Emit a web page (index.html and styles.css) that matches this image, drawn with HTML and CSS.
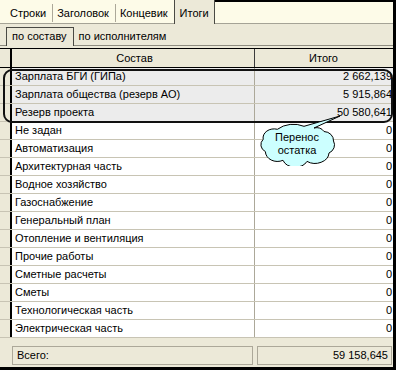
FILE: index.html
```html
<!DOCTYPE html>
<html lang="ru">

<head>
    <meta charset="UTF-8">
    <title>Итоги</title>
    <link rel="stylesheet" href="styles.css">
</head>

<body>
    <div class="window">
        <div class="tabs">
            <div class="tab tab-first">Строки</div>
            <div class="tab">Заголовок</div>
            <div class="tab">Концевик</div>
            <div class="tab tab-active">Итоги</div>
            <div class="tab-rest"></div>
        </div>

        <div class="subtabs">
            <div class="subtab subtab-active">по составу</div>
            <div class="subtab">по исполнителям</div>
        </div>

        <div class="grid">
            <div class="row head">
                <div class="ind"></div>
                <div class="name">Состав</div>
                <div class="val">Итого</div>
            </div>
            <div class="row hl">
                <div class="ind"></div>
                <div class="name">Зарплата БГИ (ГИПа)</div>
                <div class="val">2 662,139</div>
            </div>
            <div class="row hl">
                <div class="ind"></div>
                <div class="name">Зарплата общества (резерв АО)</div>
                <div class="val">5 915,864</div>
            </div>
            <div class="row hl">
                <div class="ind"></div>
                <div class="name">Резерв проекта</div>
                <div class="val">50 580,641</div>
            </div>
            <div class="row">
                <div class="ind"></div>
                <div class="name">Не задан</div>
                <div class="val">0</div>
            </div>
            <div class="row">
                <div class="ind"></div>
                <div class="name">Автоматизация</div>
                <div class="val">0</div>
            </div>
            <div class="row">
                <div class="ind"></div>
                <div class="name">Архитектурная часть</div>
                <div class="val">0</div>
            </div>
            <div class="row">
                <div class="ind"></div>
                <div class="name">Водное хозяйство</div>
                <div class="val">0</div>
            </div>
            <div class="row">
                <div class="ind"></div>
                <div class="name">Газоснабжение</div>
                <div class="val">0</div>
            </div>
            <div class="row">
                <div class="ind"></div>
                <div class="name">Генеральный план</div>
                <div class="val">0</div>
            </div>
            <div class="row">
                <div class="ind"></div>
                <div class="name">Отопление и вентиляция</div>
                <div class="val">0</div>
            </div>
            <div class="row">
                <div class="ind"></div>
                <div class="name">Прочие работы</div>
                <div class="val">0</div>
            </div>
            <div class="row">
                <div class="ind"></div>
                <div class="name">Сметные расчеты</div>
                <div class="val">0</div>
            </div>
            <div class="row">
                <div class="ind"></div>
                <div class="name">Сметы</div>
                <div class="val">0</div>
            </div>
            <div class="row">
                <div class="ind"></div>
                <div class="name">Технологическая часть</div>
                <div class="val">0</div>
            </div>
            <div class="row">
                <div class="ind"></div>
                <div class="name">Электрическая часть</div>
                <div class="val">0</div>
            </div>
        </div>

        <div class="totals">
            <div class="total-box total-label">Всего:</div>
            <div class="total-box total-value">59 158,645</div>
        </div>

        <!-- frame around the three salary rows -->
        <div class="group-frame"></div>

        <!-- callout -->
        <div class="callout">
            <svg width="86" height="56" viewBox="0 0 86 56">
                <path d="M46 16.3 L82 6 L56 18 A9 8 0 0 1 66 21.5 A10 9 0 0 1 75.5 31 A10 9 0 0 1 71 43 A14 11 0 0 1 49 51.4 A13 10 0 0 1 25 50.3 A12 10 0 0 1 7.4 41.6 A9 8 0 0 1 5.2 29.3 A11 9 0 0 1 19.4 19.3 A24 20 0 0 1 46 16.3 Z"
                    fill="#ccffff" stroke="#000" stroke-width="1" />
            </svg>
            <div class="callout-text">Перенос<br>остатка</div>
        </div>
    </div>
</body>

</html>
```

FILE: styles.css
```css
body {
    margin: 0;
    font-family: "Liberation Sans", Arial, sans-serif;
    font-size: 11px;
    color: #000;
    background-color: #fff;
}

.window {
    position: relative;
    width: 396px;
    height: 370px;
    box-sizing: border-box;
    border-right: 3px solid #000;
    border-bottom: 3px solid #000;
    background-color: #ece9d8;
    overflow: hidden;
}

/* top tabs */
.tabs {
    display: flex;
    height: 24px;
    box-sizing: border-box;
    background-color: #fdfbe8;
    border-bottom: 1px solid #a5a396;
}

.tab {
    height: 18px;
    margin-top: 4px;
    line-height: 18px;
    padding: 0 6px 0 4px;
    white-space: nowrap;
}

.tab + .tab {
    border-left: 1px solid #aca899;
}

.tab-first {
    padding-left: 10px;
}

.tab-active {
    height: 24px;
    margin-top: 0;
    margin-bottom: -1px;
    padding: 4px 5px 0 5px;
    box-sizing: border-box;
    background-color: #ece9d8;
    border-left-color: #4a4a44 !important;
    border-right: 1px solid #4a4a44;
}

.tab-rest {
    flex: 1;
    border-top: 2px solid #000;
}

/* second row of tabs */
.subtabs {
    display: flex;
    height: 22px;
    box-sizing: border-box;
    padding: 3px 0 0 6px;
    margin-bottom: 2px;
    border-bottom: 1px solid #8e8c80;
}

.subtab {
    padding: 3px 6px 0 5px;
    white-space: nowrap;
}

.subtab-active {
    height: 19px;
    margin-bottom: -1px;
    box-sizing: border-box;
    background-color: #ece9d8;
    border: 1px solid #4a4a44;
    border-bottom: none;
    padding: 2px 6px 0 5px;
}

/* grid */
.row {
    display: flex;
    height: 18px;
    box-sizing: border-box;
    border-bottom: 1px solid #c8c4b4;
    background-color: #fff;
    line-height: 17px;
}

.ind {
    width: 10px;
    flex-shrink: 0;
    border-right: 2px solid #000;
    background-color: #ece9d8;
}

.name {
    width: 239px;
    flex-shrink: 0;
    padding-left: 3px;
    border-right: 1px solid #aca899;
    white-space: nowrap;
    overflow: hidden;
}

.val {
    flex: 1;
    padding-right: 1px;
    text-align: right;
    white-space: nowrap;
}

.head {
    height: 20px;
    border-top: 1px solid #000;
    border-bottom: 1px solid #000;
    background-color: #ece9d8;
    line-height: 18px;
}

.head .name,
.head .val {
    text-align: center;
}

.head .name {
    border-right-color: #3c3c3c;
}

.hl {
    background-color: #ececec;
}

/* totals */
.totals {
    display: flex;
    gap: 4px;
    height: 29px;
    box-sizing: border-box;
    padding: 8px 1px 0 12px;
}

.total-box {
    height: 19px;
    box-sizing: border-box;
    border: 1px solid #aca899;
    line-height: 17px;
    white-space: nowrap;
}

.total-label {
    width: 241px;
    padding-left: 4px;
}

.total-value {
    flex: 1;
    padding-right: 3px;
    text-align: right;
}

/* overlays */
.group-frame {
    position: absolute;
    left: 3px;
    top: 69px;
    width: 390px;
    height: 54px;
    box-sizing: border-box;
    border: 2px solid #111;
    border-radius: 9px;
}

.callout {
    position: absolute;
    left: 258px;
    top: 110px;
    width: 86px;
    height: 56px;
}

.callout svg {
    display: block;
}

.callout-text {
    position: absolute;
    left: 0;
    top: 21px;
    width: 78px;
    line-height: 13px;
    text-align: center;
}
```
